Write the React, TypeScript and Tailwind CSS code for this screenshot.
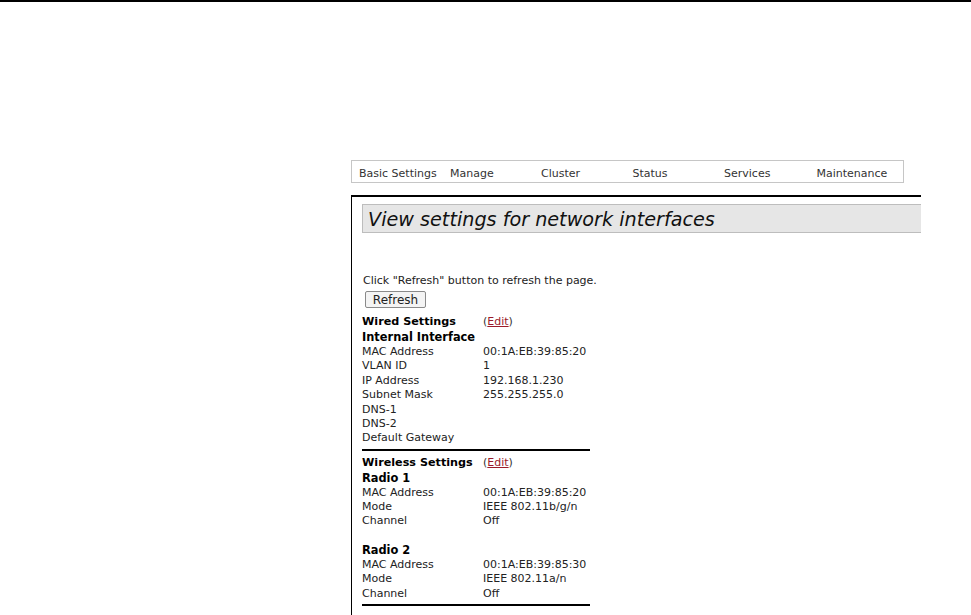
const navItems: [string, string][] = [
  ["Basic Settings", "w-[91px]"],
  ["Manage", "w-[91px]"],
  ["Cluster", "w-[91.5px]"],
  ["Status", "w-[91.5px]"],
  ["Services", "w-[92.5px]"],
  ["Maintenance", "w-[80px]"],
];

type Row = [string, string];

const wired: Row[] = [
  ["MAC Address", "00:1A:EB:39:85:20"],
  ["VLAN ID", "1"],
  ["IP Address", "192.168.1.230"],
  ["Subnet Mask", "255.255.255.0"],
  ["DNS-1", ""],
  ["DNS-2", ""],
  ["Default Gateway", ""],
];

const radio1: Row[] = [
  ["MAC Address", "00:1A:EB:39:85:20"],
  ["Mode", "IEEE 802.11b/g/n"],
  ["Channel", "Off"],
];

const radio2: Row[] = [
  ["MAC Address", "00:1A:EB:39:85:30"],
  ["Mode", "IEEE 802.11a/n"],
  ["Channel", "Off"],
];

function Rows({ rows }: { rows: Row[] }) {
  return (
    <>
      {rows.map(([k, v]) => (
        <div key={k} className="flex h-[14.4px] items-center">
          <span className="w-[121px]">{k}</span>
          <span>{v}</span>
        </div>
      ))}
    </>
  );
}

function SectionHead({ title }: { title: string }) {
  return (
    <div className="flex h-[15px] items-center">
      <span className="w-[121px] text-[11.2px] font-bold text-black">{title}</span>
      <span className="text-[11px] text-[#333]">
        (<span className="text-[#9b1b2b] underline">Edit</span>)
      </span>
    </div>
  );
}

export default function App() {
  return (
    <div
      className="min-h-[615px] border-t-2 border-black bg-white text-[11px] text-[#222]"
      style={{ fontFamily: '"DejaVu Sans", Verdana, sans-serif' }}
    >
      <div className="pl-[351px] pt-[158px]">
        <nav className="flex h-[23px] w-[553px] items-center border border-[#c6c6c6] pl-[7px] pt-[5px] text-[11px] text-[#333]">
          {navItems.map(([n, w]) => (
            <span key={n} className={`${w} shrink-0`}>
              {n}
            </span>
          ))}
        </nav>

        <div className="mt-[12px] h-[420px] w-[570px] border-l border-t-2 border-black pl-[10px] pt-[7px]">
          <div className="flex h-[29px] items-center border border-r-0 border-[#bdbdbd] bg-[#e6e6e6] pl-[5px] pt-[3px]">
            <h1 className="text-[19.2px] italic leading-none text-[#111]">
              View settings for network interfaces
            </h1>
          </div>

          <p className="mt-[41px] pl-[1px] text-[11px] leading-[14px]">
            Click "Refresh" button to refresh the page.
          </p>
          <button
            type="button"
            className="mt-[3px] ml-[3px] h-[17px] w-[61px] rounded-[2px] border border-[#8a8a8a] bg-[#f4f4f4] text-[12px] leading-none text-[#222]"
          >
            Refresh
          </button>

          <div className="mt-[6px] w-[228px]">
            <SectionHead title="Wired Settings" />
            <div className="flex h-[15px] items-center text-[11.4px] font-bold text-black">Internal Interface</div>
            <Rows rows={wired} />
            <div className="mt-[3px] h-[2px] bg-black" />

            <div className="mt-[5px]">
              <SectionHead title="Wireless Settings" />
            </div>
            <div className="flex h-[15px] items-center text-[11.4px] font-bold text-black">Radio 1</div>
            <Rows rows={radio1} />
            <div className="h-[14px]" />
            <div className="flex h-[15px] items-center text-[11.4px] font-bold text-black">Radio 2</div>
            <Rows rows={radio2} />
            <div className="mt-[3px] h-[2px] bg-black" />
          </div>
        </div>
      </div>
    </div>
  );
}
